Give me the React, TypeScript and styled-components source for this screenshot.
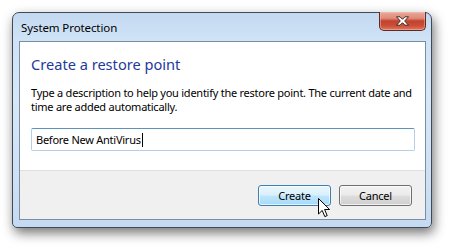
import { createGlobalStyle, styled } from "styled-components";

const Global = createGlobalStyle`
  html, body {
    margin: 0;
    padding: 0;
    background: #ffffff;
  }
  body {
    width: 453px;
    height: 249px;
    overflow: hidden;
    font-family: "Noto Sans", "Open Sans", sans-serif;
  }
`;

const App = (): JSX.Element => {
  return (
    <>
      <Global />
      <Stage>
        <Window>
          <TitleBar>
            <Title>System Protection</Title>
            <CloseButton aria-label="Close">
              <svg width="15" height="10" viewBox="0 0 15 10">
                <path
                  d="M1.5 0.8 H5 L7.5 3.3 L10 0.8 H13.5 L9.7 5 L13.5 9.2 H10 L7.5 6.7 L5 9.2 H1.5 L5.3 5 Z"
                  fill="#ffffff"
                  stroke="#4a2420"
                  strokeWidth="1"
                  strokeLinejoin="round"
                />
              </svg>
            </CloseButton>
          </TitleBar>
          <Client>
            <Content>
              <Heading>Create a restore point</Heading>
              <Description>
                Type a description to help you identify the restore point. The
                current date and
                <br />
                time are added automatically.
              </Description>
              <TextBox>
                Before New AntiVirus
                <Caret />
              </TextBox>
            </Content>
            <Footer>
              <Button primary>Create</Button>
              <Button>Cancel</Button>
              <Pointer width="13" height="20" viewBox="0 0 13 20">
                <path
                  d="M0.5 0.5 L0.5 16 L4.2 12.4 L6.8 18.6 L9.2 17.6 L6.6 11.5 L11.6 11.5 Z"
                  fill="#ffffff"
                  stroke="#000000"
                  strokeWidth="1"
                  strokeLinejoin="miter"
                />
              </Pointer>
            </Footer>
          </Client>
        </Window>
      </Stage>
    </>
  );
};

export default App;

const Stage = styled.div`
  width: 453px;
  height: 249px;
  padding: 12px 0 0 12px;
  box-sizing: border-box;
`;

const Window = styled.div`
  width: 420px;
  height: 216px;
  box-sizing: border-box;
  border: 1px solid #3f4a55;
  border-radius: 7px 7px 5px 5px;
  background: linear-gradient(
    180deg,
    #c3d9f1 0%,
    #cfe2f6 12%,
    #d6e7f8 40%,
    #cde0f4 80%,
    #c4daf1 100%
  );
  box-shadow: 2px 5px 12px rgba(0, 0, 0, 0.55);
  padding: 0 5px 7px 6px;
  display: flex;
  flex-direction: column;
`;

const TitleBar = styled.div`
  height: 28px;
  display: flex;
  justify-content: space-between;
  align-items: flex-start;
`;

const Title = styled.span`
  font-size: 11.5px;
  letter-spacing: -0.1px;
  color: #000000;
  padding: 7px 0 0 2px;
  line-height: 16px;
`;

const CloseButton = styled.div`
  width: 47px;
  height: 19px;
  box-sizing: border-box;
  margin-top: -1px;
  border: 1px solid #5d2a24;
  border-top: none;
  border-radius: 0 0 5px 5px;
  background: linear-gradient(
    180deg,
    #e9a99b 0%,
    #dd8b79 35%,
    #c4412d 50%,
    #c94d37 75%,
    #de7a5f 100%
  );
  box-shadow: inset 0 0 0 1px rgba(255, 200, 190, 0.45);
  display: flex;
  align-items: center;
  justify-content: center;
`;

const Client = styled.div`
  flex: 1;
  background: #ffffff;
  border: 1px solid #7a8da2;
  display: flex;
  flex-direction: column;
`;

const Content = styled.div`
  flex: 1;
  padding: 11px 10px 0 11px;
  display: flex;
  flex-direction: column;
`;

const Heading = styled.h1`
  margin: 0;
  font-size: 14.6px;
  font-weight: 400;
  line-height: 22px;
  color: #1e3a9c;
`;

const Description = styled.p`
  margin: 11px 0 0 0;
  font-size: 11px;
  letter-spacing: -0.25px;
  line-height: 14px;
  color: #000000;
  white-space: nowrap;
`;

const TextBox = styled.div`
  margin-top: 14px;
  height: 23px;
  box-sizing: border-box;
  border: 1px solid #b5cfe7;
  border-top-color: #5c93bc;
  border-radius: 2px;
  padding: 0 4px;
  font-size: 11px;
  letter-spacing: -0.25px;
  line-height: 21px;
  color: #000000;
  display: flex;
  align-items: center;
`;

const Caret = styled.span`
  display: inline-block;
  width: 1px;
  height: 14px;
  background: #000000;
  margin-left: 1px;
`;

const Footer = styled.div`
  position: relative;
  height: 49px;
  box-sizing: border-box;
  background: #f0f0f0;
  border-top: 1px solid #dfdfdf;
  display: flex;
  justify-content: flex-end;
  align-items: flex-start;
  gap: 8px;
  padding: 14px 13px 0 0;
`;

const Button = styled.button<{ primary?: boolean }>`
  width: 73px;
  height: 21px;
  box-sizing: border-box;
  border-radius: 3px;
  font-family: "Noto Sans", "Open Sans", sans-serif;
  font-size: 11px;
  letter-spacing: -0.2px;
  line-height: 17px;
  color: #000000;
  padding: 0;
  border: 1px solid ${(p) => (p.primary ? "#3c7fb1" : "#707070")};
  background: ${(p) =>
    p.primary
      ? "linear-gradient(180deg, #eaf6fd 0%, #d9f0fc 48%, #bee6fd 52%, #a7d9f5 100%)"
      : "linear-gradient(180deg, #f2f2f2 0%, #ebebeb 48%, #dddddd 52%, #cfcfcf 100%)"};
  box-shadow: inset 0 0 0 1px rgba(255, 255, 255, 0.7);
`;

const Pointer = styled.svg`
  position: absolute;
  left: 298px;
  top: 27px;
`;
